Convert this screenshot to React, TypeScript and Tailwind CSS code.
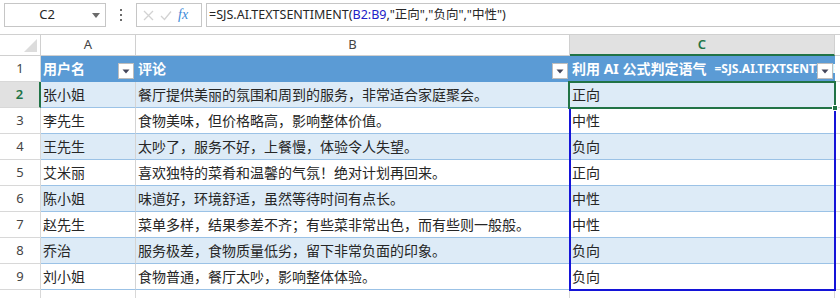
import React from "react";

const FONT = { fontFamily: '"Segoe UI", "Noto Sans", "Noto Sans CJK SC", sans-serif' };

const rows = [
  ["张小姐", "餐厅提供美丽的氛围和周到的服务，非常适合家庭聚会。", "正向"],
  ["李先生", "食物美味，但价格略高，影响整体价值。", "中性"],
  ["王先生", "太吵了，服务不好，上餐慢，体验令人失望。", "负向"],
  ["艾米丽", "喜欢独特的菜肴和温馨的气氛！绝对计划再回来。", "正向"],
  ["陈小姐", "味道好，环境舒适，虽然等待时间有点长。", "中性"],
  ["赵先生", "菜单多样，结果参差不齐；有些菜非常出色，而有些则一般般。", "中性"],
  ["乔治", "服务极差，食物质量低劣，留下非常负面的印象。", "负向"],
  ["刘小姐", "食物普通，餐厅太吵，影响整体体验。", "负向"],
];

function Drop() {
  return (
    <div className="absolute right-[2px] bottom-[2px] w-[16px] h-[16px] bg-white border border-[#bdbdbd] flex items-center justify-center">
      <svg width="8" height="5" viewBox="0 0 8 5">
        <path d="M0.5 0.5 L7.5 0.5 L4 4.5 Z" fill="#44465a" />
      </svg>
    </div>
  );
}

export default function App() {
  return (
    <div className="w-[840px] h-[298px] overflow-hidden bg-white relative text-[#262626]" style={FONT}>
      {/* Formula bar */}
      <div className="h-[35px] flex items-start pt-[3px] pl-[4px] border-b border-[#d0d0d0] relative">
        <div className="w-[102px] h-[24px] border border-[#c6c6c6] flex items-center relative">
          <span className="w-[84px] text-center text-[13px]">C2</span>
          <svg className="absolute right-[5px] top-[9px]" width="8" height="5" viewBox="0 0 8 5">
            <path d="M0 0 L8 0 L4 5 Z" fill="#6b6b6b" />
          </svg>
        </div>
        <div className="w-[30px] h-[24px] flex flex-col items-center justify-center gap-[3px]">
          <div className="w-[2px] h-[2px] bg-[#6b6b6b]" />
          <div className="w-[2px] h-[2px] bg-[#6b6b6b]" />
          <div className="w-[2px] h-[2px] bg-[#6b6b6b]" />
        </div>
        <div className="w-[66px] h-[24px] border border-[#c6c6c6] flex items-center pl-[6px] gap-[6px]">
          <svg width="11" height="11" viewBox="0 0 11 11">
            <path d="M1 1 L10 10 M10 1 L1 10" stroke="#d2d2d2" strokeWidth="1.3" />
          </svg>
          <svg width="12" height="11" viewBox="0 0 12 11">
            <path d="M1 6 L4.5 9.5 L11 1.5" stroke="#d2d2d2" strokeWidth="1.3" fill="none" />
          </svg>
          <span className="text-[14px] italic text-[#3c8ad8] leading-none" style={{ fontFamily: '"Liberation Serif", serif' }}>fx</span>
        </div>
        <div className="ml-[4px] flex-1 h-[24px] border border-[#c6c6c6] border-r-0 flex items-center pl-[2px] text-[12.5px] whitespace-nowrap">
          <span>=SJS.AI.TEXTSENTIMENT(</span>
          <span className="text-[#2020c8]">B2:B9</span>
          <span>,"正向","负向","中性")</span>
        </div>
      </div>

      {/* Column header row */}
      <div className="flex h-[21px] text-[13px]">
        <div className="w-[41px] border-r border-b border-[#d0d0d0] relative bg-white">
          <svg className="absolute right-[3px] bottom-[3px]" width="13" height="13" viewBox="0 0 13 13">
            <path d="M13 0 L13 13 L0 13 Z" fill="#dcdcdc" />
          </svg>
        </div>
        <div className="w-[95px] border-r border-b border-[#d0d0d0] flex items-center justify-center text-[#444]">A</div>
        <div className="w-[434px] border-r border-b border-[#d0d0d0] flex items-center justify-center text-[#444]">B</div>
        <div className="w-[265px] border-r border-[#d0d0d0] border-b-2 border-b-[#217346] bg-[#e1e1e1] flex items-center justify-center text-[#217346] font-semibold">C</div>
        <div className="flex-1 border-b border-[#d0d0d0]" />
      </div>

      {/* Row 1 table header */}
      <div className="flex h-[26px]">
        <div className="w-[41px] border-r border-b border-[#d8d8d8] flex items-center justify-center text-[13px] text-[#444]">1</div>
        <div className="w-[95px] bg-[#5b9bd5] border-b border-[#5b9bd5] relative flex items-center pl-[2px] text-white font-bold text-[14px]">
          用户名
          <Drop />
        </div>
        <div className="w-[434px] bg-[#5b9bd5] border-b border-[#5b9bd5] relative flex items-center pl-[2px] text-white font-bold text-[14px]">
          评论
          <Drop />
        </div>
        <div className="w-[265px] bg-[#5b9bd5] border-b border-[#5b9bd5] relative flex items-center pl-[2px] text-white font-bold whitespace-nowrap overflow-hidden">
          <span className="text-[14px]">利用 AI 公式判定语气</span>
          <span className="text-[12px] ml-[8px]">=SJS.AI.TEXTSENTIMENT(B2:B9,"正向","负向","中性")</span>
          <Drop />
        </div>
        <div className="flex-1 border-b border-[#d8d8d8]" />
      </div>

      {rows.map((r, i) => {
        const band = i % 2 === 0;
        const sel = i === 0;
        return (
          <div key={i} className="flex h-[26px] text-[14px]">
            <div
              className={
                sel
                  ? "w-[41px] border-r-2 border-r-[#217346] border-b border-b-[#d8d8d8] bg-[#e1e1e1] flex items-center justify-center text-[13px] text-[#217346] font-semibold"
                  : "w-[41px] border-r border-b border-[#d8d8d8] flex items-center justify-center text-[13px] text-[#444]"
              }
            >
              {i + 2}
            </div>
            <div className={(band ? "bg-[#ddebf7] " : "bg-white ") + "w-[95px] border-r border-r-[#d4d4d4] border-b border-b-[#9bc2e6] flex items-center pl-[2px] whitespace-nowrap overflow-hidden"}>
              {r[0]}
            </div>
            <div className={(band ? "bg-[#ddebf7] " : "bg-white ") + "w-[434px] border-r border-r-[#d4d4d4] border-b border-b-[#9bc2e6] flex items-center pl-[2px] whitespace-nowrap overflow-hidden"}>
              {r[1]}
            </div>
            <div className={(band ? "bg-[#ddebf7] " : "bg-white ") + "w-[265px] border-r border-r-[#d4d4d4] border-b border-b-[#9bc2e6] flex items-center pl-[2px] whitespace-nowrap overflow-hidden"}>
              {r[2]}
            </div>
            <div className="flex-1 border-b border-[#d8d8d8]" />
          </div>
        );
      })}

      {/* Row 10 */}
      <div className="flex h-[26px]">
        <div className="w-[41px] border-r border-[#d8d8d8] flex items-center justify-center text-[13px] text-[#444]">10</div>
        <div className="w-[95px] border-r border-[#d8d8d8]" />
        <div className="w-[434px] border-r border-[#d8d8d8]" />
        <div className="w-[265px] border-r border-[#d8d8d8]" />
      </div>

      {/* Range highlight C2:C9 */}
      <div className="absolute left-[569px] top-[107px] w-[267px] h-[184px] border-2 border-[#1414d8] border-t-0 pointer-events-none" />
      {/* Active cell C2 */}
      <div className="absolute left-[568px] top-[81px] w-[268px] h-[28px] border-2 border-[#217346] pointer-events-none" />
      <div className="absolute left-[832px] top-[105px] w-[6px] h-[6px] bg-[#217346] border border-white" />
    </div>
  );
}
